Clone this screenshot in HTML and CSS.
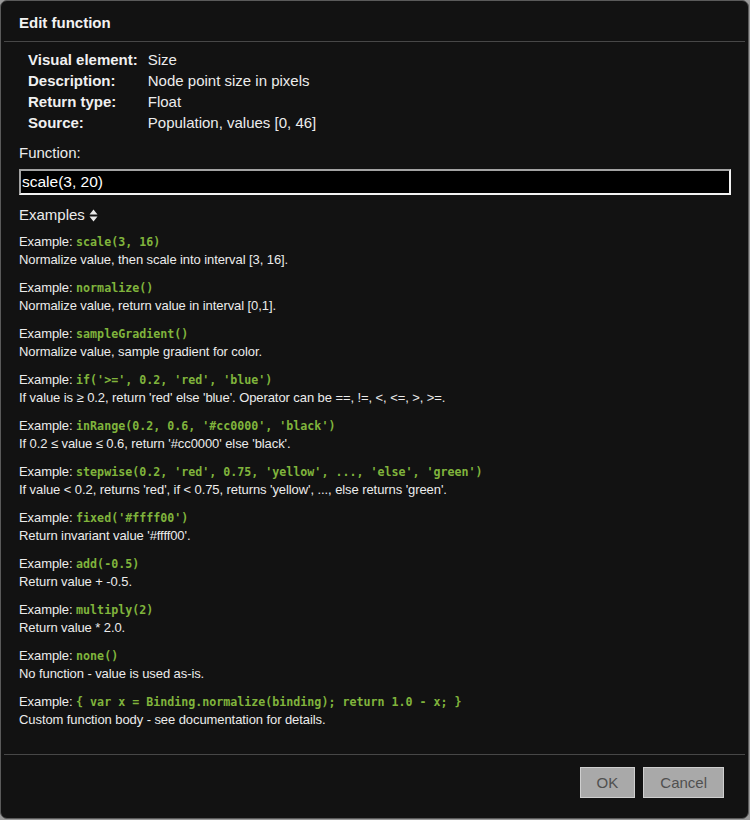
FILE: index.html
```html
<!DOCTYPE html>
<html>
<head>
<meta charset="utf-8">
<link rel="stylesheet" href="styles.css">
</head>
<body>
<div class="dialog">
  <div class="title">Edit function</div>
  <div class="sep"></div>
  <div class="content">
    <table class="info">
      <tr><th>Visual element:</th><td>Size</td></tr>
      <tr><th>Description:</th><td>Node point size in pixels</td></tr>
      <tr><th>Return type:</th><td>Float</td></tr>
      <tr><th>Source:</th><td>Population, values [0, 46]</td></tr>
    </table>
    <div class="flabel">Function:</div>
    <input class="finput" type="text" value="scale(3, 20)">
    <div class="ex-title">Examples <svg class="sort" width="9" height="13" viewBox="0 0 9 13"><path d="M4.5 0.5 L8.5 5.5 L0.5 5.5 Z M4.5 12.5 L8.5 7.5 L0.5 7.5 Z" fill="#e8e8e8"/></svg></div>
    <div class="ex"><div>Example: <code>scale(3, 16)</code></div><div>Normalize value, then scale into interval [3, 16].</div></div>
    <div class="ex"><div>Example: <code>normalize()</code></div><div>Normalize value, return value in interval [0,1].</div></div>
    <div class="ex"><div>Example: <code>sampleGradient()</code></div><div>Normalize value, sample gradient for color.</div></div>
    <div class="ex"><div>Example: <code>if('&gt;=', 0.2, 'red', 'blue')</code></div><div>If value is ≥ 0.2, return 'red' else 'blue'. Operator can be ==, !=, &lt;, &lt;=, &gt;, &gt;=.</div></div>
    <div class="ex"><div>Example: <code>inRange(0.2, 0.6, '#cc0000', 'black')</code></div><div>If 0.2 ≤ value ≤ 0.6, return '#cc0000' else 'black'.</div></div>
    <div class="ex"><div>Example: <code>stepwise(0.2, 'red', 0.75, 'yellow', ..., 'else', 'green')</code></div><div>If value &lt; 0.2, returns 'red', if &lt; 0.75, returns 'yellow', ..., else returns 'green'.</div></div>
    <div class="ex"><div>Example: <code>fixed('#ffff00')</code></div><div>Return invariant value '#ffff00'.</div></div>
    <div class="ex"><div>Example: <code>add(-0.5)</code></div><div>Return value + -0.5.</div></div>
    <div class="ex"><div>Example: <code>multiply(2)</code></div><div>Return value * 2.0.</div></div>
    <div class="ex"><div>Example: <code>none()</code></div><div>No function - value is used as-is.</div></div>
    <div class="ex"><div>Example: <code>{ var x = Binding.normalize(binding); return 1.0 - x; }</code></div><div>Custom function body - see documentation for details.</div></div>
  </div>
  <div class="sep"></div>
  <div class="footer">
    <button class="btn">OK</button>
    <button class="btn">Cancel</button>
  </div>
</div>
</body>
</html>
```

FILE: styles.css
```css
html, body {
  margin: 0;
  padding: 0;
  background: #9a9a9a;
}
body {
  width: 750px;
  height: 820px;
  font-family: "Liberation Sans", Arial, sans-serif;
  color: #ececec;
}
.dialog {
  box-sizing: border-box;
  width: 749px;
  height: 819px;
  background: #121212;
  border: 1px solid #5a5a5a;
  border-radius: 7px;
  display: flex;
  flex-direction: column;
  overflow: hidden;
}
.title {
  font-size: 15px;
  font-weight: bold;
  line-height: 18px;
  padding: 13px 18px 9px;
  color: #f2f2f2;
}
.sep {
  height: 1px;
  background: #474747;
  margin: 0 3px;
}
.content {
  flex: 1;
  padding: 7px 17px 0 18px;
}
.info {
  border-collapse: collapse;
  margin-left: 8px;
  font-size: 15px;
}
.info th {
  text-align: left;
  font-weight: bold;
  padding: 0 10px 0 1px;
  line-height: 21px;
  height: 21px;
  color: #f0f0f0;
}
.info td {
  padding: 0;
  line-height: 21px;
  color: #ececec;
}
.flabel {
  margin-top: 11px;
  font-size: 15px;
  line-height: 18px;
}
.finput {
  display: block;
  box-sizing: border-box;
  margin: 7px 0 0 0;
  width: 712px;
  height: 26px;
  background: #000;
  color: #fff;
  font-family: "Liberation Sans", Arial, sans-serif;
  font-size: 15.5px;
  padding: 0 1px;
  border-style: solid;
  border-width: 2px;
  border-color: #a3a3a3 #f2f2f2 #f2f2f2 #a3a3a3;
  outline: none;
}
.ex-title {
  margin-top: 11px;
  font-size: 15px;
  line-height: 18px;
  display: flex;
  align-items: center;
  gap: 4px;
}
.sort {
  display: block;
}
.ex {
  margin-top: 10px;
  font-size: 13px;
  line-height: 18px;
  letter-spacing: -0.08px;
}
.ex-title + .ex {
  margin-top: 9px;
}
code {
  font-family: "DejaVu Sans Mono", monospace;
  font-size: 11.65px;
  font-weight: bold;
  color: #80b43c;
  letter-spacing: 0;
}
.footer {
  display: flex;
  justify-content: flex-end;
  gap: 8px;
  padding: 12px 24px 0 0;
  height: 63px;
  box-sizing: border-box;
}
.btn {
  height: 31px;
  padding: 0 16px;
  background: #a9a9a9;
  border: 1px solid #cfcfcf;
  color: #505050;
  font-family: "Liberation Sans", Arial, sans-serif;
  font-size: 15px;
}
```
